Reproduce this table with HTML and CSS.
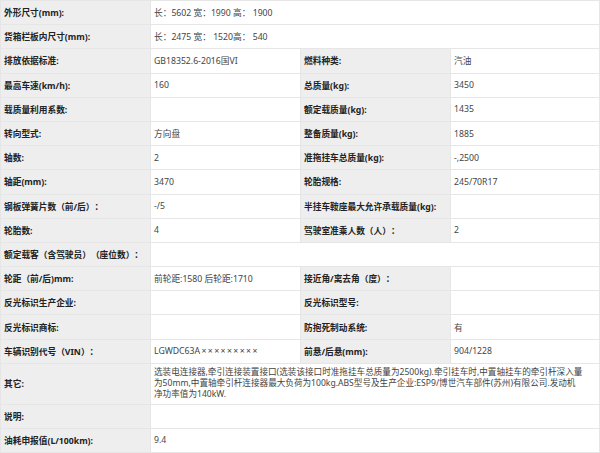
FILE: index.html
```html
<!DOCTYPE html>
<html lang="zh-CN">
<head>
<meta charset="utf-8">
<title>参数</title>
<link rel="stylesheet" href="styles.css">
</head>
<body>
<table class="spec">
  <colgroup><col class="c1"><col class="c2"><col class="c3"><col class="c4"></colgroup>
  <tr><td class="k">外形尺寸(mm):</td><td class="v" colspan="3">长<span class="fw">：</span>5602 宽<span class="fw">：</span>1990 高<span class="fw">：</span> 1900</td></tr>
  <tr><td class="k">货箱栏板内尺寸(mm):</td><td class="v" colspan="3">长<span class="fw">：</span>2475 宽<span class="fw">：</span> 1520高<span class="fw">：</span> 540</td></tr>
  <tr><td class="k">排放依据标准:</td><td class="v">GB18352.6-2016国VI</td><td class="k">燃料种类:</td><td class="v">汽油</td></tr>
  <tr><td class="k">最高车速(km/h):</td><td class="v">160</td><td class="k">总质量(kg):</td><td class="v">3450</td></tr>
  <tr><td class="k">载质量利用系数:</td><td class="v"></td><td class="k">额定载质量(kg):</td><td class="v">1435</td></tr>
  <tr><td class="k">转向型式:</td><td class="v">方向盘</td><td class="k">整备质量(kg):</td><td class="v">1885</td></tr>
  <tr><td class="k">轴数:</td><td class="v">2</td><td class="k">准拖挂车总质量(kg):</td><td class="v">-,2500</td></tr>
  <tr><td class="k">轴距(mm):</td><td class="v">3470</td><td class="k">轮胎规格:</td><td class="v">245/70R17</td></tr>
  <tr><td class="k">钢板弹簧片数（前/后）：</td><td class="v">-/5</td><td class="k">半挂车鞍座最大允许承载质量(kg):</td><td class="v"></td></tr>
  <tr><td class="k">轮胎数:</td><td class="v">4</td><td class="k">驾驶室准乘人数（人）：</td><td class="v">2</td></tr>
  <tr><td class="k">额定载客（含驾驶员）（座位数）：</td><td class="v" colspan="3"></td></tr>
  <tr><td class="k">轮距（前/后)mm:</td><td class="v">前轮距:1580 后轮距:1710</td><td class="k">接近角/离去角（度）：</td><td class="v"></td></tr>
  <tr><td class="k">反光标识生产企业:</td><td class="v"></td><td class="k">反光标识型号:</td><td class="v"></td></tr>
  <tr><td class="k">反光标识商标:</td><td class="v"></td><td class="k">防抱死制动系统:</td><td class="v">有</td></tr>
  <tr><td class="k">车辆识别代号（VIN）：</td><td class="v">LGWDC63A<span class="mask">×××××××××</span></td><td class="k">前悬/后悬(mm):</td><td class="v">904/1228</td></tr>
  <tr class="tall"><td class="k">其它:</td><td class="v multi" colspan="3">选装电连接器,牵引连接装置接口(选装该接口时准拖挂车总质量为2500kg).牵引挂车时,中置轴挂车的牵引杆深入量<br>为50mm,中置轴牵引杆连接器最大负荷为100kg.ABS型号及生产企业:ESP9/博世汽车部件(苏州)有限公司.发动机<br>净功率值为140kW.</td></tr>
  <tr><td class="k">说明:</td><td class="v" colspan="3"></td></tr>
  <tr><td class="k">油耗申报值(L/100km):</td><td class="v" colspan="3">9.4</td></tr>
</table>
</body>
</html>
```

FILE: styles.css
```css
html, body {
  margin: 0;
  padding: 0;
  background: #ffffff;
}

body {
  font-family: "Noto Sans", "Noto Sans CJK SC", sans-serif;
  font-size: 8.7px;
  color: #333333;
  text-spacing-trim: space-all;
}

.spec {
  border-collapse: collapse;
  table-layout: fixed;
  width: 599px;
}

.spec .c1, .spec .c2, .spec .c3 { width: 150px; }
.spec .c4 { width: 149px; }

.spec tr { height: 24.2px; }
.spec tr.tall { height: 40.7px; }

.spec td {
  border: 1px solid #e6e6e6;
  padding: 0 3px;
  vertical-align: middle;
  white-space: nowrap;
  overflow: hidden;
}

.spec .k {
  background: #eeeeee;
  font-weight: bold;
  color: #222222;
}

.spec .v {
  background: #ffffff;
  color: #444444;
}

.fw {
  display: inline-block;
  width: 8.7px;
  text-align: left;
}

.mask {
  margin-left: 1.4px;
  letter-spacing: 1.4px;
}

.spec .multi {
  white-space: normal;
  font-size: 8.6px;
  line-height: 11px;
}
```
